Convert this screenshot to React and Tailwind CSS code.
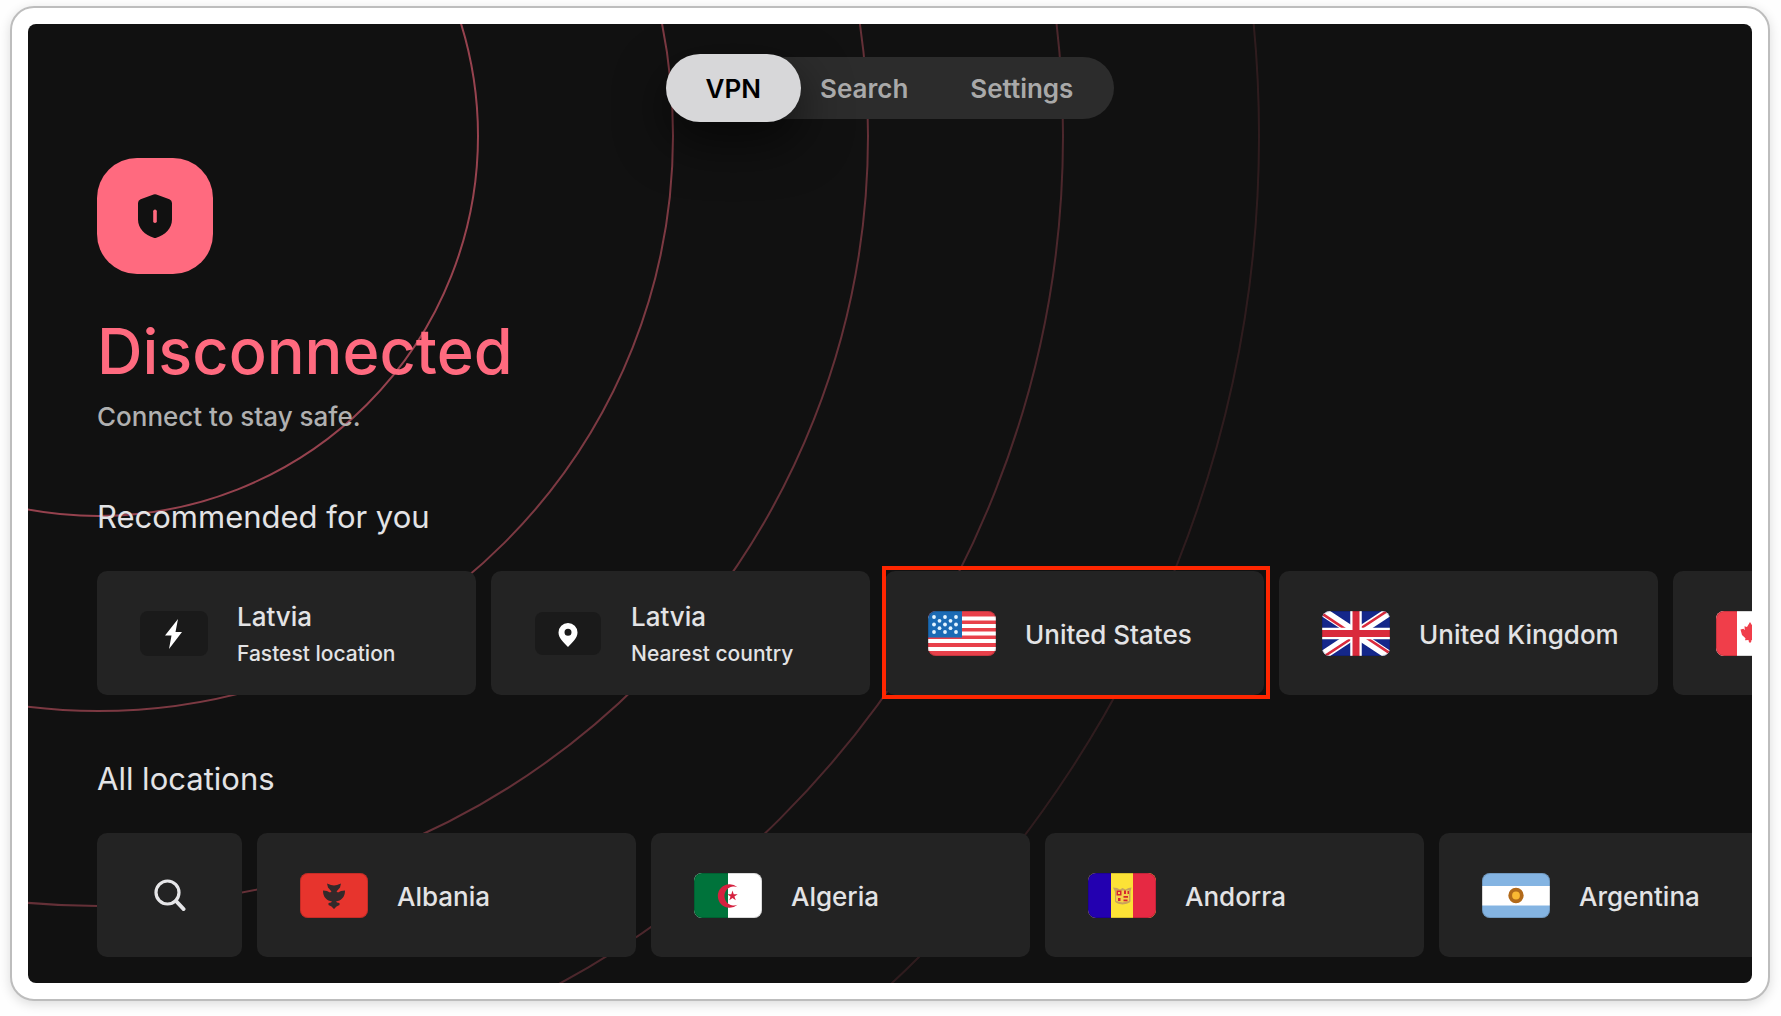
import { useState } from 'react';

const rings = [
  { r: 380, opacity: 0.56 },
  { r: 575, opacity: 0.45 },
  { r: 770, opacity: 0.35 },
  { r: 965, opacity: 0.25 },
  { r: 1161, opacity: 0.13 },
];

const tabs = ['VPN', 'Search', 'Settings'];

const recommended = [
  { name: 'Latvia', note: 'Fastest location', icon: <BoltIcon /> },
  { name: 'Latvia', note: 'Nearest country', icon: <PinIcon /> },
  { name: 'United States', icon: <FlagUS />, highlighted: true },
  { name: 'United Kingdom', icon: <FlagUK /> },
  { label: 'Canada', icon: <FlagCanada /> },
];

const locations = [
  { name: 'Albania', icon: <FlagAlbania /> },
  { name: 'Algeria', icon: <FlagAlgeria /> },
  { name: 'Andorra', icon: <FlagAndorra /> },
  { name: 'Argentina', icon: <FlagArgentina /> },
];

function ShieldIcon() {
  return (
    <svg className="h-11 w-[34px]" viewBox="0 0 34 44" aria-hidden="true">
      <path
        fill="#111111"
        d="M15.6.5a4 4 0 0 1 2.8 0l13 4.8A4 4 0 0 1 34 9v16.5C34 34.500 27 41 18.300 43.700a4 4 0 0 1-2.600 0C7 41 0 34.500 0 25.500V9a4 4 0 0 1 2.600-3.700z"
      />
      <rect x="15.200" y="15.500" width="3.600" height="13.500" rx="1.800" fill="#ff6a7f" />
    </svg>
  );
}

function SearchIcon() {
  return (
    <svg className="h-8 w-8" viewBox="0 0 32 32" fill="none" stroke="#e6e6e8" strokeLinecap="round" aria-hidden="true">
      <circle cx="13.500" cy="13.500" r="11.500" strokeWidth="3.200" />
      <path d="M22 22l7.500 8" strokeWidth="4" />
    </svg>
  );
}

function BoltIcon() {
  return (
    <svg className="h-[45px] w-[68px]" viewBox="0 0 68 45" aria-hidden="true">
      <rect width="68" height="45" rx="8" fill="#1a1a1a" />
      <path d="M38 8L25 24.500h6.500L29 38l13-17h-6.500z" fill="#fff" />
    </svg>
  );
}

function PinIcon() {
  return (
    <svg className="h-[45px] w-[68px]" viewBox="0 0 68 45" aria-hidden="true">
      <rect x="1" y="1" width="66" height="43" rx="8" fill="#1a1a1a" />
      <path
        fill="#fff"
        fillRule="evenodd"
        d="M34 12a9.500 9.500 0 0 0-9.500 9.500c0 5.500 5 9.500 9.500 14.500 4.500-5 9.500-9 9.500-14.500A9.500 9.500 0 0 0 34 12zm0 5.700a3.500 3.500 0 1 1 0 7 3.500 3.500 0 0 1 0-7z"
      />
    </svg>
  );
}

// every flag shares the same rounded 68x45 frame
function Flag({ children }) {
  return (
    <svg className="h-[45px] w-[68px] rounded-lg" viewBox="0 0 68 45" aria-hidden="true">
      {children}
      <rect x="0.500" y="0.500" width="67" height="44" rx="7.500" fill="none" stroke="#000" strokeOpacity="0.15" />
    </svg>
  );
}

function FlagUS() {
  const stars = [
    [6, 6], [17, 6], [28, 6],
    [11.5, 9.8], [22.5, 9.8],
    [6, 13.5], [17, 13.5], [28, 13.5],
    [11.5, 17.2], [22.5, 17.2],
    [6, 21], [17, 21], [28, 21],
  ];
  return (
    <Flag>
      <rect width="68" height="45" fill="#e8404a" />
      {[5.5, 13, 20.5, 28, 36].map((y) => (
        <rect key={y} y={y} width="68" height="4" fill="#fff" />
      ))}
      <rect width="34" height="26.500" fill="#1b6bb5" />
      {stars.map(([x, y]) => (
        <circle key={`${x}-${y}`} cx={x} cy={y} r="1.900" fill="#e4f4ff" />
      ))}
    </Flag>
  );
}

function FlagUK() {
  return (
    <Flag>
      <rect width="68" height="45" fill="#14278a" />
      <path d="M0 0L68 45M68 0L0 45" stroke="#fff" strokeWidth="9" />
      <path d="M-1 2L33 24.500M34 20.500L69-2.500M-1 47.500L34 24.500M35 20.500L69 43" stroke="#d92a3c" strokeWidth="2.600" />
      <path d="M34 0v45M0 22.500h68" stroke="#fff" strokeWidth="11.500" />
      <path d="M34 0v45M0 22.500h68" stroke="#d92a3c" strokeWidth="7" />
    </Flag>
  );
}

function FlagCanada() {
  return (
    <Flag>
      <rect width="68" height="45" fill="#fff" />
      <path d="M0 0h21v45H0zM47 0h21v45H47z" fill="#f03e4a" />
      <path
        d="M34 11l-3 5-2.500-.800.300 4-1.300-1.500-3 .800 1.500 5.500 3.500 3.300-.500 2 3.500-.300.500 2.500h2l.500-2.500 3.500.300-.500-2 3.500-3.300 1.500-5.500-3-.800-1.300 1.500.300-4-2.500.800z"
        fill="#f03e4a"
      />
    </Flag>
  );
}

function FlagAlbania() {
  return (
    <Flag>
      <rect width="68" height="45" fill="#e7342d" />
      <path
        d="M27 10.500l4 1.500 3 .500 3-.500 4-1.500-1 4-3.500 4 1.500 1 3-1.500 4-.500c0 5-2 8-5.500 10L36 28.500l1 1 2.500.500v2L36.500 33.500 34 36l-2.500-2.500-3-1.500v-2l2.500-.500 1-1-3.500-1C25 25.500 23 22.500 23 17.500l4 .500 3 1.500 1.500-1-3.500-4z"
        fill="#33292a"
      />
    </Flag>
  );
}

function FlagAlgeria() {
  return (
    <Flag>
      <rect width="68" height="45" fill="#fff" />
      <rect width="34" height="45" fill="#00733b" />
      <path d="M43.500 14.200A11.800 11.800 0 1 0 43.500 31.800 9.500 9.500 0 1 1 43.500 14.200z" fill="#d5213f" />
      <path d="M38.500 17.500l1.200 3.800 4-.100-3.300 2.300 1.400 3.800-3.300-2.400-3.200 2.400 1.200-3.800-3.200-2.300 4 .100z" fill="#d5213f" />
    </Flag>
  );
}

function FlagAndorra() {
  return (
    <Flag>
      <rect width="68" height="45" fill="#fce236" />
      <rect width="23" height="45" fill="#2300b0" />
      <rect x="45" width="23" height="45" fill="#e62943" />
      <path
        d="M25 14.500l4 .500 3 1.500 2.500-1.500 3 1.500 3-1.500 3-.500-1 4V28c0 2-4 3-8 3.500-4-.500-7.500-1.500-7.500-3.500v-9.500z"
        fill="#c9a25c"
      />
      <path d="M28 17.500h13V28l-6.500 1.500L28 28z" fill="#f5d04c" />
      <path d="M28.500 17.500h5v5h-5zM36 17.500h2v3.500h-2zM30 25h2.500v3H30zM35.500 23h4.500v1.800h-4.500zM35.500 26.500h4v1.800h-4zM39.500 18h1.500v3h-1.500z" fill="#d5262e" />
      <rect x="30" y="19" width="2" height="2" fill="#f5d04c" />
    </Flag>
  );
}

function FlagArgentina() {
  return (
    <Flag>
      <rect width="68" height="45" fill="#84b4e2" />
      <rect y="13" width="68" height="19.500" fill="#fff" />
      <circle cx="34" cy="22.500" r="5.800" fill="#fab833" stroke="#b26a1a" strokeWidth="3.800" />
    </Flag>
  );
}

function LocationCard({ name, label, note, icon, highlighted }) {
  return (
    <button
      type="button"
      aria-label={label}
      className="relative flex h-[124px] w-[379px] shrink-0 items-center gap-[29px] rounded-[10px] bg-[#232323] pl-[43px] text-left text-[#e3e3e5]"
    >
      {icon}
      {name && (
        <span className="flex flex-col pt-1">
          <span className="text-[26px] leading-[38px] font-medium">{name}</span>
          {note && <span className="text-[21px] leading-9 font-medium">{note}</span>}
        </span>
      )}
      {highlighted && (
        <span className="absolute -top-[5px] -right-1.5 -bottom-1 -left-[3px] border-4 border-[#ff2600]" />
      )}
    </button>
  );
}

function Section({ title, children }) {
  return (
    <section className="mt-16">
      <h2 className="text-[31px] leading-10 text-[#e3e3e5]">{title}</h2>
      <div className="mt-[34px] flex gap-[15px]">{children}</div>
    </section>
  );
}

export default function App() {
  const [activeTab, setActiveTab] = useState('VPN');

  return (
    <div className="bg-[#fefefe] pt-1.5 pr-[11px] pb-[15px] pl-2.5 font-['Inter','Liberation_Sans',sans-serif]">
      <div className="rounded-3xl border-2 border-[#bdbdbd] bg-white p-4 shadow-[0_3px_12px_rgba(0,0,0,0.14)]">
        <main className="relative overflow-hidden rounded-lg bg-[#111111] pt-[33px] pb-[26px] pl-[69px]">
          {/* background rings */}
          <svg className="absolute inset-0 h-full w-full" aria-hidden="true">
            {rings.map((ring) => (
              <circle
                key={ring.r}
                cx="70"
                cy="112"
                r={ring.r}
                fill="none"
                stroke="#ff6a7f"
                strokeOpacity={ring.opacity}
                strokeWidth="2"
              />
            ))}
          </svg>

          <div className="relative">
            <nav className="-ml-[69px] flex justify-center">
              <div className="flex h-[62px] items-center rounded-full bg-[#2c2c2c] pr-2.5">
                {tabs.map((tab) => (
                  <button
                    key={tab}
                    type="button"
                    onClick={() => setActiveTab(tab)}
                    className={
                      tab === activeTab
                        ? '-mr-3 h-[68px] rounded-full bg-[#d7d7d9] px-10 text-[26px] font-semibold text-black shadow-[0_20px_50px_rgba(0,0,0,0.6)]'
                        : 'h-[62px] rounded-full px-[31px] text-[26px] font-semibold text-[#a9a9a9]'
                    }
                  >
                    {tab}
                  </button>
                ))}
              </div>
            </nav>

            <div className="mt-[39px] flex h-[116px] w-[116px] items-center justify-center rounded-[40px] bg-[#ff6a7f]">
              <ShieldIcon />
            </div>
            <h1 className="mt-[41px] text-[63px] leading-[72px] font-medium text-[#ff6a7f]">Disconnected</h1>
            <p className="mt-3.5 text-[26px] leading-8 font-medium text-[#b0b0b0]">Connect to stay safe.</p>

            <Section title="Recommended for you">
              {recommended.map((item) => (
                <LocationCard key={item.note || item.name || item.label} {...item} />
              ))}
            </Section>

            <Section title="All locations">
              <button
                type="button"
                aria-label="Search locations"
                className="flex h-[124px] w-[145px] shrink-0 items-center justify-center rounded-[10px] bg-[#232323]"
              >
                <SearchIcon />
              </button>
              {locations.map((item) => (
                <LocationCard key={item.name} {...item} />
              ))}
            </Section>
          </div>
        </main>
      </div>
    </div>
  );
}
